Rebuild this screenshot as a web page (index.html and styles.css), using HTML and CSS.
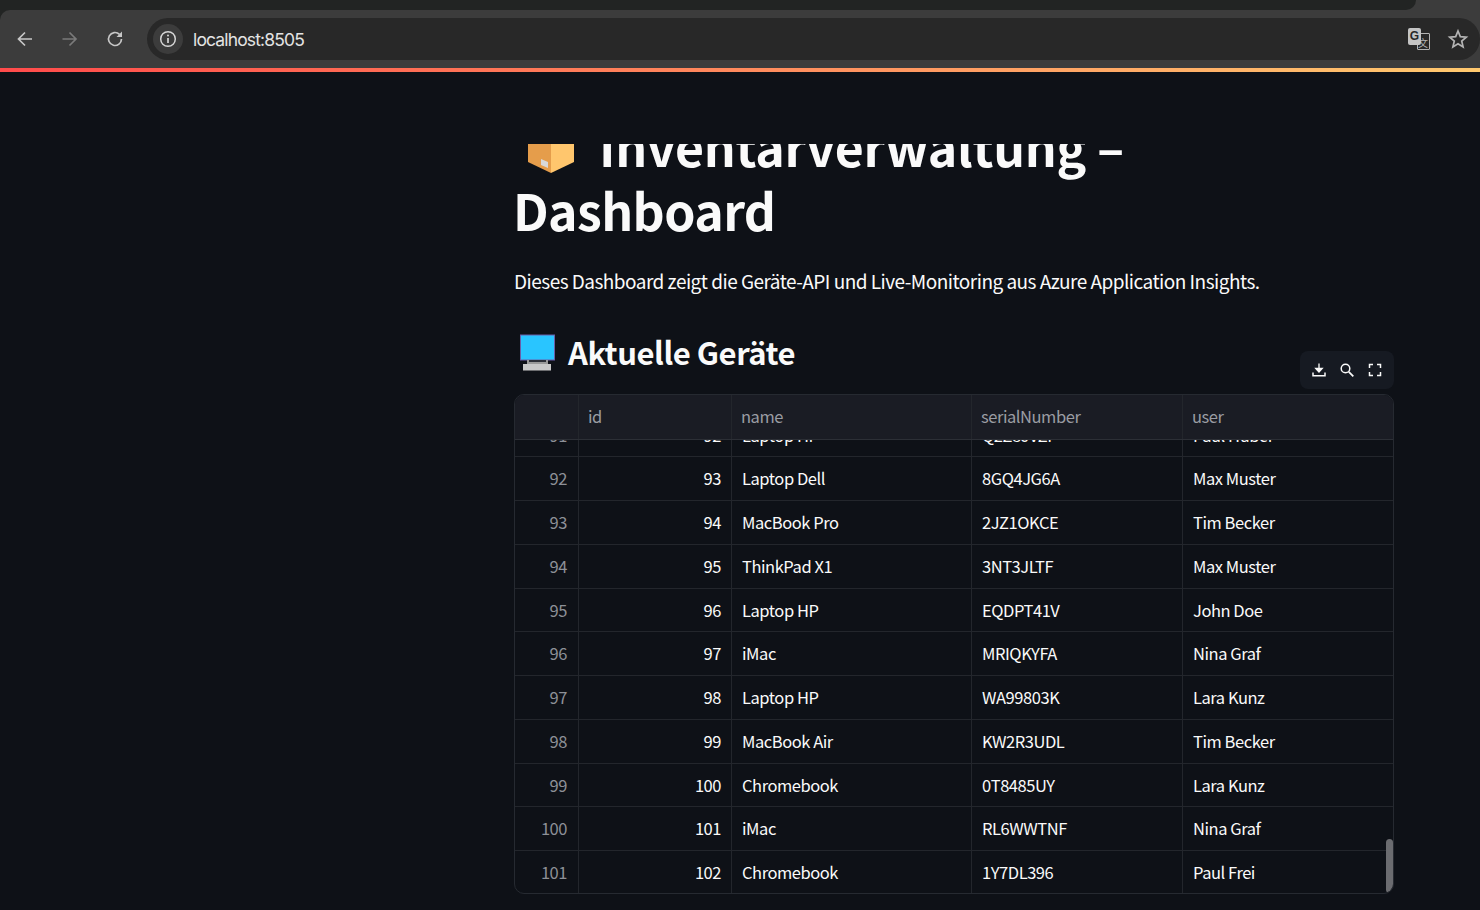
FILE: index.html
```html
<!DOCTYPE html>
<html lang="de">
<head>
    <meta charset="UTF-8">
    <title>Inventarverwaltung</title>
    <link rel="stylesheet" href="styles.css">
</head>
<body>

    <div class="chrome">
        <div class="tabstrip"><div class="tab-end"></div></div>

        <header class="toolbar">
            <button class="nav-btn">
                <svg width="20" height="20" viewBox="0 0 20 20"><path d="M17 10H4M10 3.500L3.500 10l6.500 6.500" fill="none" stroke="#c7c7c7" stroke-width="1.700"/></svg>
            </button>
            <button class="nav-btn">
                <svg width="20" height="20" viewBox="0 0 20 20"><path d="M2.500 10h13M9.500 3.500L16 10l-6.500 6.500" fill="none" stroke="#7a7a7a" stroke-width="1.700"/></svg>
            </button>
            <button class="nav-btn">
                <svg width="20" height="20" viewBox="0 0 20 20"><path d="M16.500 10a6.500 6.500 0 1 1-2-4.700" fill="none" stroke="#c7c7c7" stroke-width="1.700"/><path d="M17 2.500V8h-5.500z" fill="#c7c7c7"/></svg>
            </button>
            <div class="omnibox">
                <span class="site-info">
                    <svg width="20" height="20" viewBox="0 0 20 20"><circle cx="10" cy="10" r="7.300" fill="none" stroke="#d6d6d6" stroke-width="1.500"/><path d="M10 9v5" stroke="#d6d6d6" stroke-width="1.700"/><circle cx="10" cy="6.500" r="1" fill="#d6d6d6"/></svg>
                </span>
                <span class="url">localhost:8505</span>
                <span class="omni-icons">
                    <span class="translate">
                        <span class="tr-back"></span>
                        <span class="tr-x">文</span>
                        <span class="tr-front">G</span>
                    </span>
                    <svg width="22" height="22" viewBox="0 0 22 22"><path d="M11 3l2.300 5.600 6 .5-4.600 3.900 1.400 5.900L11 15.800 5.900 18.900l1.400-5.900-4.600-3.900 6-.5z" fill="none" stroke="#b4b4b4" stroke-width="1.700"/></svg>
                </span>
            </div>
        </header>
    </div>
    <div class="deco-line"></div>

    <main class="main">
        <div class="content">
            <h1 class="title">
                <span class="title-first">
                    <svg class="box-icon" width="48" height="42" viewBox="0 0 48 42"><path d="M1 1l23 9v31L1 30z" fill="#e59d4b"/><path d="M47 1L24 10v31l23-11z" fill="#ffc66d"/><path d="M1 1l23 9 23-9L24-8z" fill="#f5b866"/><path d="M14 27l7 3v6l-7-3z" fill="#d9d9d9"/></svg>
                    <span>Inventarverwaltung –</span>
                </span>
                <span class="title-second">Dashboard</span>
            </h1>

            <p class="intro">Dieses Dashboard zeigt die Geräte-API und Live-Monitoring aus Azure Application Insights.</p>

            <h2 class="subtitle">
                <svg width="38" height="38" viewBox="0 0 38 38"><rect x="1.500" y="1" width="34" height="25" fill="#29c5ff" stroke="#6a5ea8" stroke-width="1"/><path d="M8 26h21v4H8z" fill="#9a9a9a"/><path d="M10 26h17v2H10z" fill="#2d3038"/><rect x="4" y="30" width="28" height="6.500" fill="#c9c9c9"/></svg>
                <span>Aktuelle Geräte</span>
            </h2>

            <div class="table-tools">
                <div class="tools">
                    <svg width="16" height="16" viewBox="0 0 16 16"><path d="M8 1.500v8M4.800 6.500L8 10l3.200-3.500z" fill="#fafafa" stroke="#fafafa" stroke-width="1.300"/><path d="M2 10.500v3.200h12v-3.200" fill="none" stroke="#fafafa" stroke-width="1.500"/></svg>
                    <svg width="16" height="16" viewBox="0 0 16 16"><circle cx="6.500" cy="6.500" r="4.300" fill="none" stroke="#fafafa" stroke-width="1.500"/><path d="M9.800 9.800l4.500 4.500" stroke="#fafafa" stroke-width="1.800"/></svg>
                    <svg width="16" height="16" viewBox="0 0 16 16"><path d="M2.500 6V2.500H6M10 2.500h3.500V6M13.500 10v3.500H10M6 13.500H2.500V10" fill="none" stroke="#fafafa" stroke-width="1.500"/></svg>
                </div>
            </div>

            <div class="table-wrap">
                <div class="row head">
                    <div class="cell"></div>
                    <div class="cell">id</div>
                    <div class="cell">name</div>
                    <div class="cell">serialNumber</div>
                    <div class="cell">user</div>
                </div>
                <div class="rows">
                    <div class="rows-inner">
                        <div class="row"><div class="cell num idx">91</div><div class="cell num">92</div><div class="cell">Laptop HP</div><div class="cell">Q2Z8JVZP</div><div class="cell">Paul Huber</div></div>
                        <div class="row"><div class="cell num idx">92</div><div class="cell num">93</div><div class="cell">Laptop Dell</div><div class="cell">8GQ4JG6A</div><div class="cell">Max Muster</div></div>
                        <div class="row"><div class="cell num idx">93</div><div class="cell num">94</div><div class="cell">MacBook Pro</div><div class="cell">2JZ1OKCE</div><div class="cell">Tim Becker</div></div>
                        <div class="row"><div class="cell num idx">94</div><div class="cell num">95</div><div class="cell">ThinkPad X1</div><div class="cell">3NT3JLTF</div><div class="cell">Max Muster</div></div>
                        <div class="row"><div class="cell num idx">95</div><div class="cell num">96</div><div class="cell">Laptop HP</div><div class="cell">EQDPT41V</div><div class="cell">John Doe</div></div>
                        <div class="row"><div class="cell num idx">96</div><div class="cell num">97</div><div class="cell">iMac</div><div class="cell">MRIQKYFA</div><div class="cell">Nina Graf</div></div>
                        <div class="row"><div class="cell num idx">97</div><div class="cell num">98</div><div class="cell">Laptop HP</div><div class="cell">WA99803K</div><div class="cell">Lara Kunz</div></div>
                        <div class="row"><div class="cell num idx">98</div><div class="cell num">99</div><div class="cell">MacBook Air</div><div class="cell">KW2R3UDL</div><div class="cell">Tim Becker</div></div>
                        <div class="row"><div class="cell num idx">99</div><div class="cell num">100</div><div class="cell">Chromebook</div><div class="cell">0T8485UY</div><div class="cell">Lara Kunz</div></div>
                        <div class="row"><div class="cell num idx">100</div><div class="cell num">101</div><div class="cell">iMac</div><div class="cell">RL6WWTNF</div><div class="cell">Nina Graf</div></div>
                        <div class="row"><div class="cell num idx">101</div><div class="cell num">102</div><div class="cell">Chromebook</div><div class="cell">1Y7DL396</div><div class="cell">Paul Frei</div></div>
                    </div>
                </div>
                <div class="scrollbar"></div>
            </div>
        </div>
    </main>

</body>
</html>
```

FILE: styles.css
```css
* {
    box-sizing: border-box;
}

html, body {
    margin: 0;
    height: 910px;
    overflow: hidden;
}

body {
    font-family: 'Noto Sans CJK SC', 'Noto Sans', sans-serif;
    background-color: #0e1117;
    color: #fafafa;
}

/* browser chrome */
.chrome {
    background-color: #222423;
}

.tabstrip {
    height: 10px;
    background-color: #3c3c3c;
}

.tab-end {
    width: 1416px;
    height: 10px;
    background-color: #222423;
    border-bottom-right-radius: 10px;
}

.toolbar {
    height: 58px;
    background-color: #3c3c3c;
    display: flex;
    align-items: center;
    padding-left: 2px;
    border-top-left-radius: 10px;
}

.nav-btn {
    width: 45px;
    height: 40px;
    border: 0;
    padding: 0;
    background: none;
    display: flex;
    align-items: center;
    justify-content: center;
}

.omnibox {
    flex: 1;
    height: 42px;
    margin-left: 10px;
    background-color: #282828;
    border-radius: 21px;
    display: flex;
    align-items: center;
    padding-left: 6px;
}

.site-info {
    width: 30px;
    height: 30px;
    border-radius: 50%;
    background-color: #3c3c3c;
    display: flex;
    align-items: center;
    justify-content: center;
}

.url {
    margin-left: 10px;
    font-family: 'Inter', sans-serif;
    font-size: 17.5px;
    letter-spacing: -0.85px;
    color: #e3e3e3;
}

.omni-icons {
    margin-left: auto;
    display: flex;
    align-items: center;
    gap: 17px;
    padding-right: 11px;
}

.translate {
    position: relative;
    width: 22px;
    height: 22px;
    display: block;
}

.tr-back {
    position: absolute;
    right: 0;
    bottom: 0;
    width: 13px;
    height: 17px;
    border: 1.500px solid #b4b4b4;
    border-radius: 1px;
}

.tr-x {
    position: absolute;
    right: 2px;
    bottom: 2px;
    font-size: 10px;
    line-height: 11px;
    color: #b4b4b4;
}

.tr-front {
    position: absolute;
    left: 0;
    top: 0;
    width: 13px;
    height: 17px;
    background-color: #c4c4c4;
    border-radius: 2px;
    color: #282828;
    font-family: 'Liberation Sans', sans-serif;
    font-size: 12px;
    font-weight: bold;
    line-height: 17px;
    text-align: center;
}

.deco-line {
    height: 4px;
    background-image: linear-gradient(90deg, #ff4b4b, #ffc96f);
}

/* page */
.main {
    height: 838px;
    overflow: hidden;
    padding-top: 72px;
    padding-left: 514px;
}

.content {
    width: 880px;
}

.title {
    margin: 0;
    font-size: 50px;
    font-weight: 700;
    line-height: 60px;
    letter-spacing: -0.3px;
}

.title-first {
    height: 38px;
    margin-bottom: -3px;
    overflow: hidden;
    display: flex;
    align-items: flex-end;
    padding-left: 13px;
    gap: 24px;
}

.title-first span {
    margin-bottom: 7px;
    flex: none;
}

.box-icon {
    flex: none;
    margin-bottom: 8px;
}

.title-second {
    display: block;
    height: 60px;
    margin-left: -1px;
    letter-spacing: -0.6px;
}

.intro {
    margin: 25px 0 0;
    font-size: 19px;
    line-height: 34px;
    letter-spacing: -0.52px;
}

.subtitle {
    margin: 30px 0 0;
    height: 46px;
    display: flex;
    align-items: center;
    gap: 11px;
    padding-left: 5px;
    font-size: 31px;
    font-weight: 600;
    letter-spacing: -0.45px;
}

.subtitle svg {
    margin-top: 4px;
}

.table-tools {
    height: 38px;
    margin-top: -23px;
    display: flex;
    justify-content: flex-end;
}

.tools {
    width: 94px;
    height: 38px;
    background-color: #161a22;
    border-radius: 8px;
    display: flex;
    align-items: center;
    justify-content: space-between;
    padding: 0 11px;
}

.table-wrap {
    position: relative;
    margin-top: 5px;
    width: 880px;
    height: 500px;
    border: 1px solid #262a31;
    border-radius: 10px;
    overflow: hidden;
}

.row {
    display: grid;
    grid-template-columns: 64px 153px 240px 211px 1fr;
    height: 43.75px;
    border-bottom: 1px solid #23262c;
    font-size: 16.5px;
    letter-spacing: -0.45px;
    line-height: 42.5px;
}

.rows {
    height: 454px;
    overflow: hidden;
}

.rows-inner {
    margin-top: -26.5px;
}

.cell {
    padding: 0 10px;
    border-right: 1px solid #23262c;
    white-space: nowrap;
}

.cell:last-child {
    border-right: 0;
}

.num {
    text-align: right;
}

.idx {
    padding-right: 11px;
    color: #8d9097;
}

.head {
    height: 45px;
    background-color: #1a1c24;
    color: #9a9ca3;
    border-bottom: 1px solid #2c2f36;
    position: relative;
    z-index: 1;
}

.head .cell {
    padding-left: 9px;
}

.scrollbar {
    position: absolute;
    right: 0;
    bottom: 0;
    width: 7px;
    height: 54px;
    background-color: #6b6c70;
    border-radius: 4px;
}
```
